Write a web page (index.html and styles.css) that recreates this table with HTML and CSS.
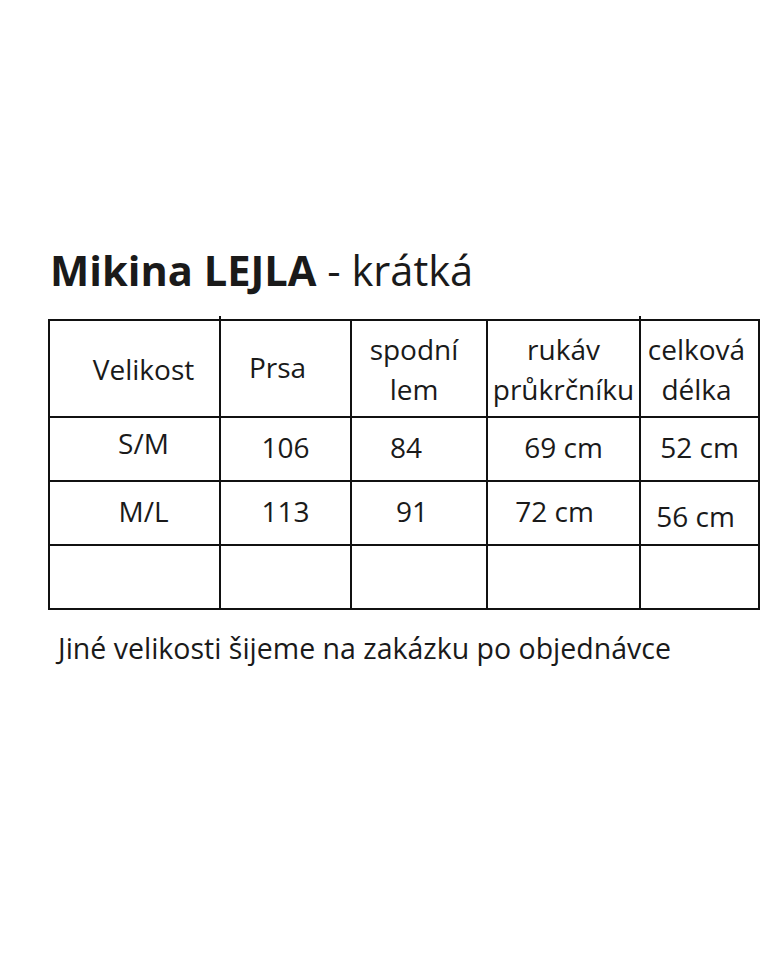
FILE: index.html
```html
<!DOCTYPE html>
<html lang="cs">
<head>
<meta charset="utf-8">
<title>Mikina LEJLA - krátká</title>
<link rel="stylesheet" href="styles.css">
</head>
<body>
<main class="page">
  <h1 class="title"><strong>Mikina LEJLA</strong> - krátká</h1>
  <table class="sizes">
    <colgroup>
      <col class="c1"><col class="c2"><col class="c3"><col class="c4"><col class="c5">
    </colgroup>
    <tr class="head">
      <td class="first">Velikost</td>
      <td class="up2 nl8 tick">Prsa</td>
      <td class="nl5">spodní<br>lem</td>
      <td>rukáv<br>průkrčníku</td>
      <td class="nl3 tick">celková<br>délka</td>
    </tr>
    <tr class="row">
      <td class="first up4">S/M</td>
      <td>106</td>
      <td class="nl13">84</td>
      <td>69 cm</td>
      <td>52 cm</td>
    </tr>
    <tr class="row">
      <td class="first">M/L</td>
      <td>113</td>
      <td class="nl7">91</td>
      <td class="nl9">72 cm</td>
      <td class="down5 nl4">56 cm</td>
    </tr>
    <tr class="row">
      <td></td><td></td><td></td><td></td><td></td>
    </tr>
  </table>
  <p class="note">Jiné velikosti šijeme na zakázku po objednávce</p>
</main>
</body>
</html>
```

FILE: styles.css
```css
html, body {
  margin: 0;
  padding: 0;
  background: #ffffff;
}

body {
  width: 768px;
  height: 960px;
  font-family: "Open Sans", "Noto Sans", "Liberation Sans", sans-serif;
  color: #1a1a1a;
}

.page {
  padding-top: 242px;
}

.title {
  margin: 0 0 0 50px;
  font-size: 41.6px;
  line-height: 56px;
  font-weight: 400;
  letter-spacing: 0;
}

.title strong {
  font-weight: 700;
}

.sizes {
  margin: 21px 0 0 48px;
  width: 710px;
  table-layout: fixed;
  border-collapse: collapse;
  font-size: 28px;
  line-height: 40px;
}

.c1 { width: 171px; }
.c2 { width: 131px; }
.c3 { width: 136px; }
.c4 { width: 153px; }
.c5 { width: 119px; }

.sizes td {
  border: 2px solid #111111;
  padding: 0;
  text-align: center;
  vertical-align: middle;
  white-space: nowrap;
}

.sizes .head {
  height: 97px;
}

.sizes .row {
  height: 64px;
}

.sizes .row td {
  padding-bottom: 4px;
}

/* hand-drawn overshoot of the vertical rules above the top edge */
.sizes td.tick {
  position: relative;
}

.sizes td.tick::before {
  content: "";
  position: absolute;
  left: -2px;
  top: -5px;
  width: 2px;
  height: 6px;
  background: #111111;
}

.sizes td.first { padding-left: 18px; }
.sizes td.up2 { padding-bottom: 4px; }
.sizes td.up4 { padding-bottom: 12px; }
.sizes td.down5 { padding-bottom: 0; padding-top: 6px; }
.sizes td.nl3 { padding-right: 6px; }
.sizes td.nl4 { padding-right: 8px; }
.sizes td.nl5 { padding-right: 10px; }
.sizes td.nl7 { padding-right: 14px; }
.sizes td.nl8 { padding-right: 16px; }
.sizes td.nl9 { padding-right: 18px; }
.sizes td.nl13 { padding-right: 26px; }

.note {
  margin: 18px 0 0 58px;
  font-size: 28.5px;
  line-height: 40px;
}
```
